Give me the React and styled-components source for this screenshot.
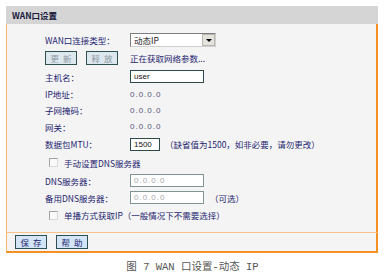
import React from 'react'
import styled, { createGlobalStyle } from 'styled-components'

const GlobalStyle = createGlobalStyle`
  html, body {
    margin: 0;
    padding: 0;
    background: #ffffff;
  }
  body {
    font-family: "Noto Sans CJK SC", "Liberation Sans", sans-serif;
    font-size: 8.5px;
  }
`

const navy = '#1d1d70'

const Page = styled.div`
  width: 385px;
  height: 275px;
  padding-top: 6px;
  box-sizing: border-box;
`

const Panel = styled.div`
  margin-left: 6px;
  width: 372px;
`

const Header = styled.div`
  height: 18px;
  background: #d5d5d5;
  display: flex;
  align-items: center;
  padding-left: 6px;
  color: #1a1a40;
  font-size: 8.5px;
  font-weight: bold;
`

const Body = styled.div`
  background: #f4f4f4;
  border-left: 1px solid #f6b56a;
  border-right: 2px solid #f39222;
  padding: 7px 0 8px 38px;
`

const Row = styled.div`
  height: ${p => p.$h}px;
  display: flex;
  align-items: center;
  color: ${navy};
  white-space: nowrap;
`

const Label = styled.div`
  width: 85px;
  flex-shrink: 0;
`

const Value = styled.div`
  color: #55557f;
  letter-spacing: 1px;
  font-family: "Liberation Sans", sans-serif;
  font-size: 8px;
`

const Note = styled.span`
  margin-left: ${p => p.$gap || 5}px;
  color: ${navy};
`

const Select = styled.div`
  width: 86px;
  height: 14px;
  box-sizing: border-box;
  border: 1px solid #7d7d7d;
  border-right-color: #d0d0d0;
  border-bottom-color: #d0d0d0;
  background: #ffffff;
  display: flex;
  align-items: center;
  justify-content: space-between;
  padding-left: 3px;
  color: #222;
`

const Arrow = styled.div`
  width: 13px;
  height: 12px;
  box-sizing: border-box;
  background: #e4e3dc;
  border: 1px solid #b8b8b0;
  display: flex;
  align-items: center;
  justify-content: center;
  &::after {
    content: '';
    border-left: 3px solid transparent;
    border-right: 3px solid transparent;
    border-top: 3px solid #000;
  }
`

const Input = styled.div`
  width: ${p => p.$w}px;
  height: 13px;
  box-sizing: border-box;
  border: 1px solid ${p => (p.$disabled ? '#7f9494' : '#2c4a4a')};
  background: #ffffff;
  display: flex;
  align-items: center;
  padding-left: 3px;
  color: ${p => (p.$disabled ? '#a8a8a8' : '#111')};
  font-family: "Liberation Sans", sans-serif;
  font-size: 8px;
  letter-spacing: ${p => (p.$disabled ? '1px' : '0')};
`

const Button = styled.div`
  width: 32px;
  height: 14px;
  box-sizing: border-box;
  border: 1px solid #2f5050;
  background: ${p => (p.$disabled ? '#dde8ee' : '#d3e5f6')};
  color: ${p => (p.$disabled ? '#8a96a0' : navy)};
  display: flex;
  align-items: center;
  justify-content: center;
  letter-spacing: 4px;
  text-indent: 4px;
  margin-right: ${p => p.$mr || 0}px;
`

const Check = styled.div`
  width: 9px;
  height: 9px;
  box-sizing: border-box;
  border: 1px solid #a3a3a3;
  border-right-color: #d8d8d8;
  border-bottom-color: #d8d8d8;
  background: #fafafa;
  margin: 0 6px 0 4px;
`

const Footer = styled.div`
  background: #f4f4f4;
  border-top: 1px solid #f7c38a;
  border-left: 1px solid #f6b56a;
  border-right: 2px solid #f39222;
  border-bottom: 2px solid #f39222;
  height: 18px;
  display: flex;
  align-items: center;
  padding-left: 8px;
`

const Caption = styled.div`
  margin-top: 7px;
  height: 14px;
  line-height: 14px;
  text-align: center;
  color: #555;
  font-size: 10.5px;
  font-family: "Liberation Mono", "Noto Sans CJK SC", monospace;
`

export default function App() {
  return (
    <Page>
      <GlobalStyle />
      <Panel>
        <Header>WAN口设置</Header>
        <Body>
          <Row $h={18}>
            <Label>WAN口连接类型：</Label>
            <Select>动态IP<Arrow /></Select>
          </Row>
          <Row $h={18}>
            <Button $disabled $mr={9}>更新</Button>
            <Button $disabled $mr={12}>释放</Button>
            <span>正在获取网络参数...</span>
          </Row>
          <Row $h={19}>
            <Label>主机名：</Label>
            <Input $w={74}>user</Input>
          </Row>
          <Row $h={16}>
            <Label>IP地址：</Label>
            <Value>0.0.0.0</Value>
          </Row>
          <Row $h={16}>
            <Label>子网掩码：</Label>
            <Value>0.0.0.0</Value>
          </Row>
          <Row $h={17}>
            <Label>网关：</Label>
            <Value>0.0.0.0</Value>
          </Row>
          <Row $h={18}>
            <Label>数据包MTU：</Label>
            <Input $w={30}>1500</Input>
            <Note>（缺省值为1500，如非必要，请勿更改）</Note>
          </Row>
          <Row $h={19}>
            <Check />
            <span>手动设置DNS服务器</span>
          </Row>
          <Row $h={17}>
            <Label>DNS服务器：</Label>
            <Input $w={74} $disabled>0.0.0.0</Input>
          </Row>
          <Row $h={17}>
            <Label>备用DNS服务器：</Label>
            <Input $w={74} $disabled>0.0.0.0</Input>
            <Note $gap={6}>（可选）</Note>
          </Row>
          <Row $h={18}>
            <Check />
            <span>单播方式获取IP（一般情况下不需要选择）</span>
          </Row>
        </Body>
        <Footer>
          <Button $mr={9}>保存</Button>
          <Button>帮助</Button>
        </Footer>
      </Panel>
      <Caption>图 7 WAN 口设置-动态 IP</Caption>
    </Page>
  )
}
